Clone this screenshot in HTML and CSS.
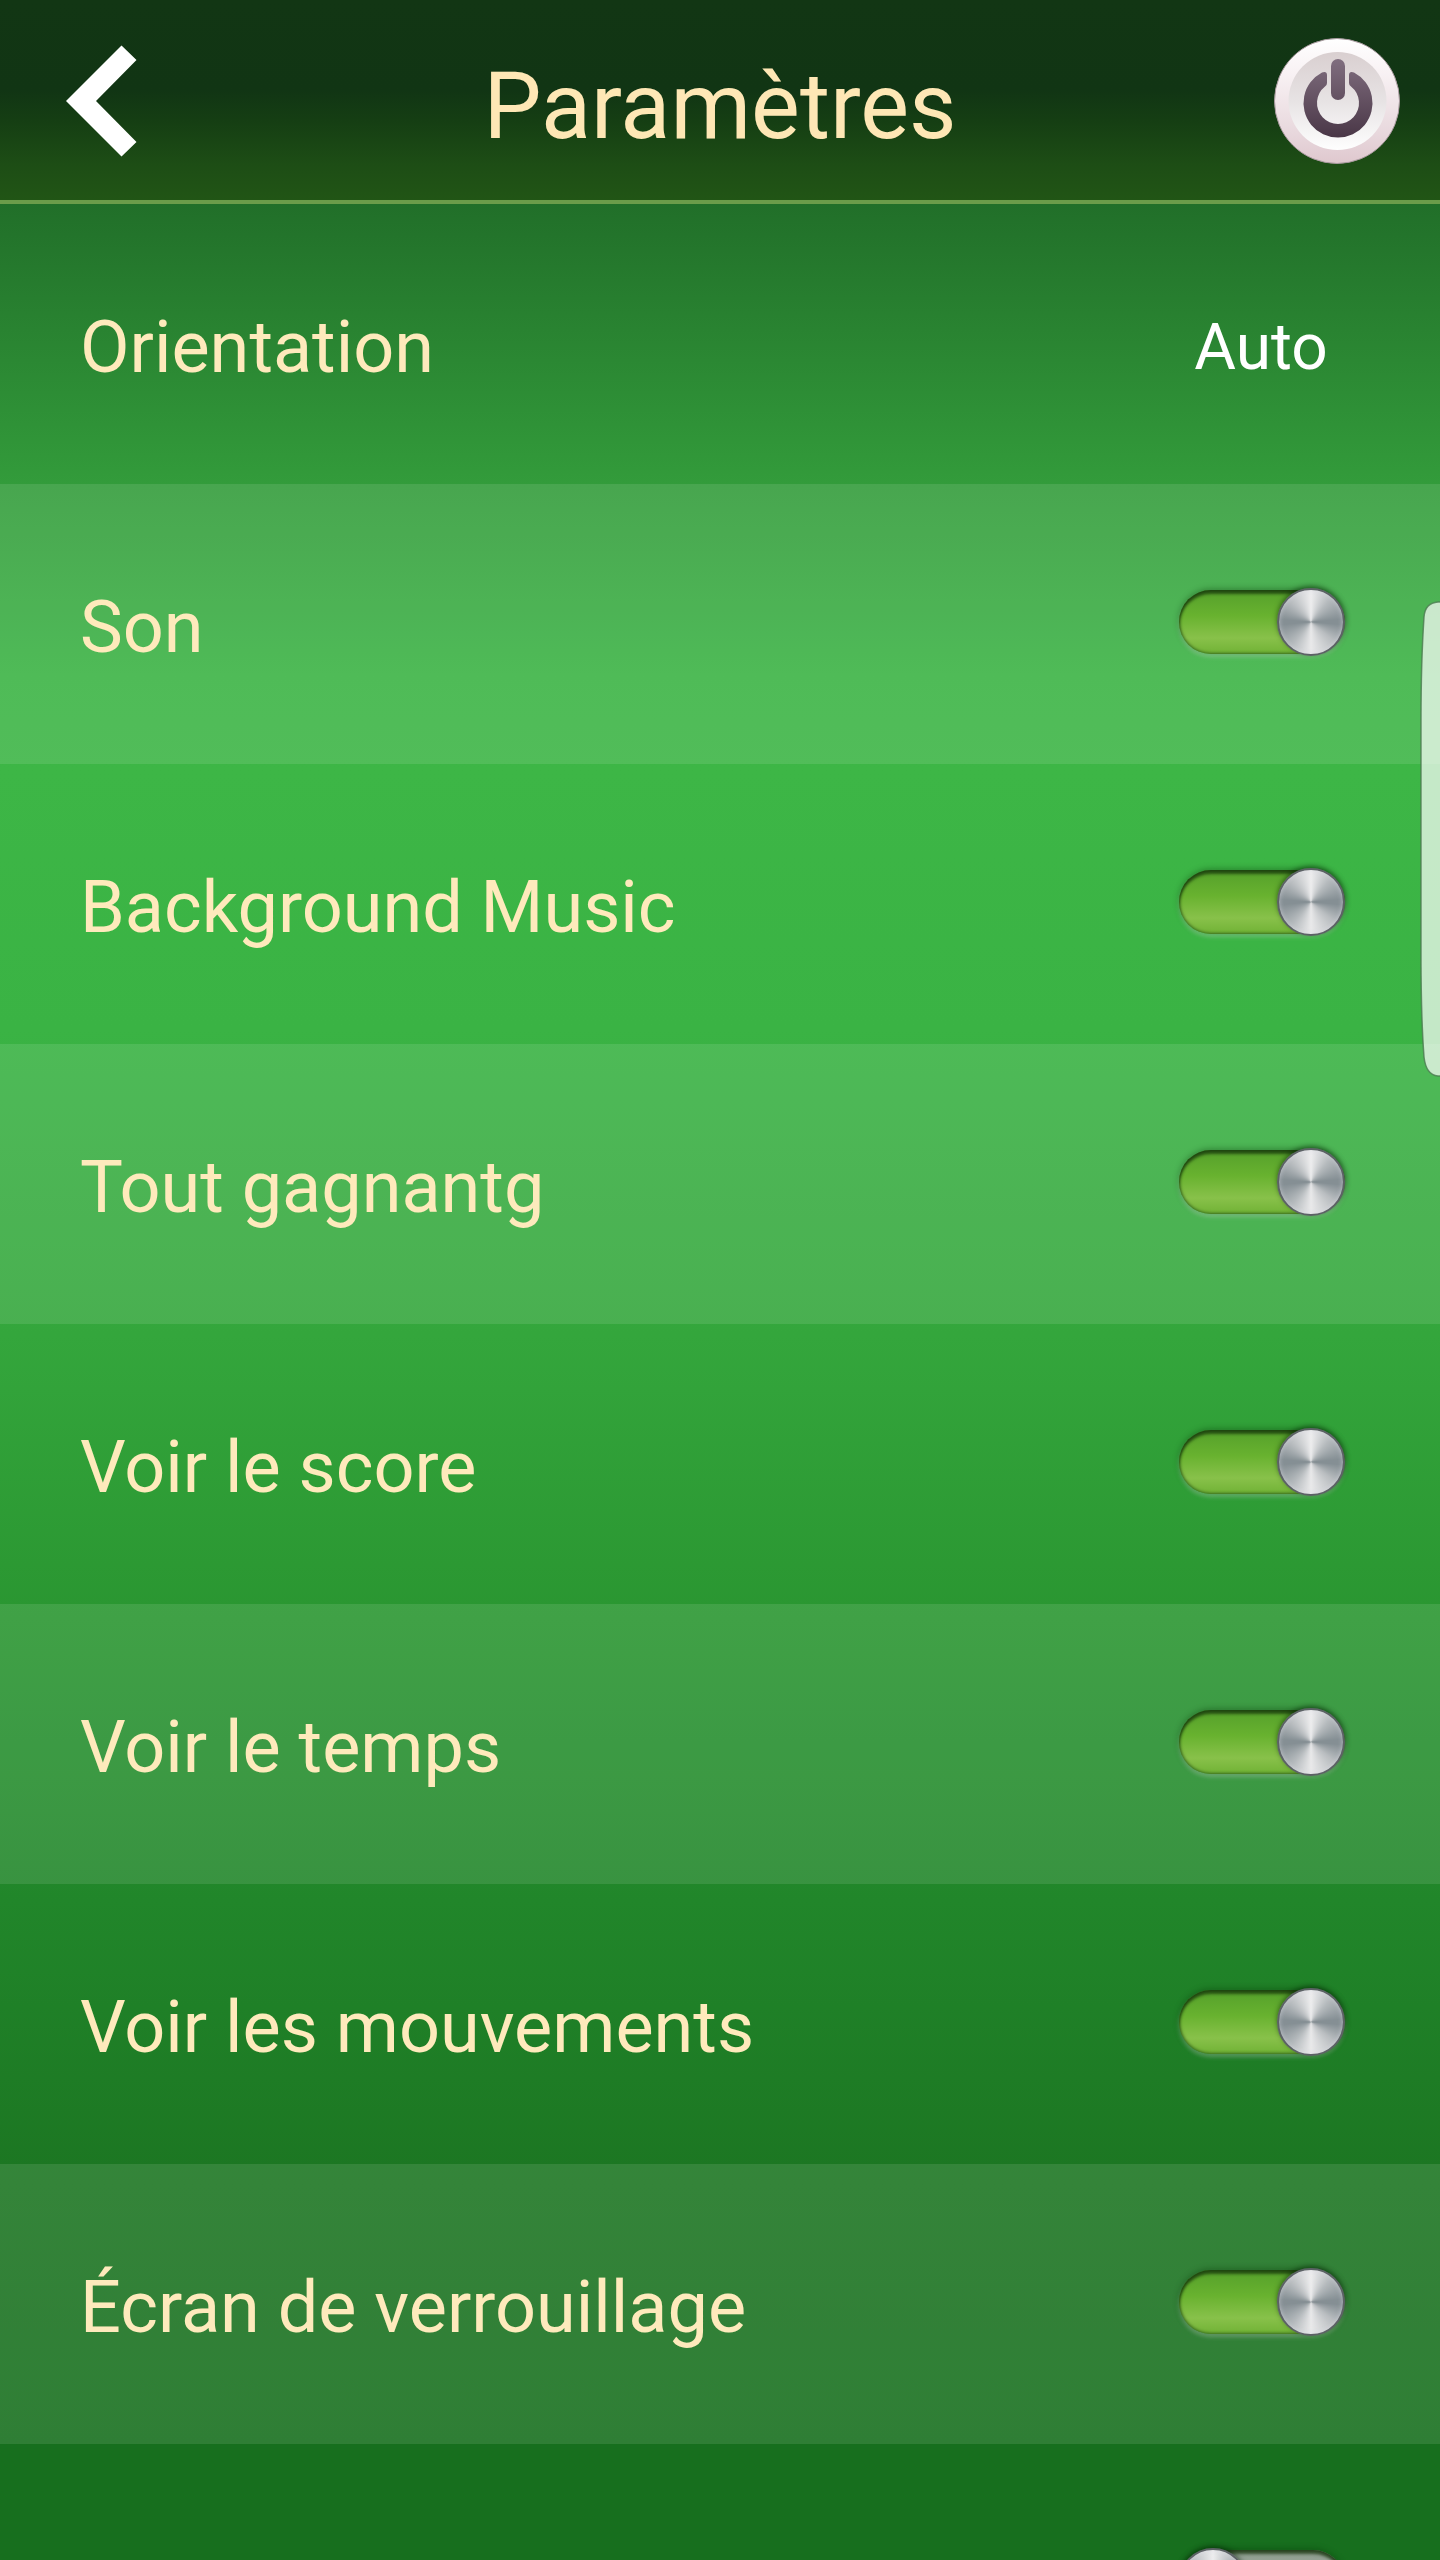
FILE: index.html
```html
<!DOCTYPE html>
<html lang="fr">
<head>
<meta charset="utf-8">
<meta name="viewport" content="width=device-width, initial-scale=1">
<title>Paramètres</title>
<link rel="stylesheet" href="styles.css">
</head>
<body>
<div class="screen">
  <header class="header">
    <button class="icon-button icon-button-start" type="button" aria-label="Retour">
      <svg class="back-icon" viewBox="0 0 72 112" aria-hidden="true">
        <path fill="#fff" d="M0 56 55.500 0.500 70.500 15 30 56 70.500 97 55.500 111.500z"/>
      </svg>
    </button>
    <h1 class="title">Paramètres</h1>
    <button class="icon-button icon-button-end" type="button" aria-label="Quitter">
      <svg class="power-icon" viewBox="0 0 128 128" aria-hidden="true">
        <defs>
          <linearGradient id="rim" x1="0" y1="0" x2="0" y2="1">
            <stop offset="0" stop-color="#fff"/>
            <stop offset=".25" stop-color="#f9f3f5"/>
            <stop offset=".75" stop-color="#e8d8dd"/>
            <stop offset="1" stop-color="#dfc8ce"/>
          </linearGradient>
          <linearGradient id="dish" x1="0" y1="0" x2="0" y2="1">
            <stop offset="0" stop-color="#d9cfd0"/>
            <stop offset=".5" stop-color="#e7e3e4"/>
            <stop offset="1" stop-color="#fefefe"/>
          </linearGradient>
          <linearGradient id="glyph" gradientUnits="userSpaceOnUse" x1="0" y1="22" x2="0" y2="100">
            <stop offset="0" stop-color="#806e7f"/>
            <stop offset="1" stop-color="#4a3747"/>
          </linearGradient>
        </defs>
        <circle cx="64" cy="64" r="62.500" fill="url(#rim)" stroke="#a99a9f" stroke-width="1"/>
        <circle cx="64.500" cy="64" r="49" fill="url(#dish)"/>
        <path fill="url(#glyph)" d="M54 38Q54 34 49 35.500A34.500 34.500 0 1 0 81 35.500Q76 34 76 38V46Q76 48 78 49.500A21 21 0 1 1 52 49.500Q54 48 54 46z"/>
        <rect x="58" y="22" width="14" height="41" rx="7" fill="url(#glyph)"/>
      </svg>
    </button>
  </header>

  <main class="list">
    <div class="row">
      <span class="label" id="orientation">Orientation</span>
      <button class="value" type="button" aria-describedby="orientation">Auto</button>
    </div>
    <div class="row">
      <label class="label" for="sound">Son</label>
      <input class="switch" type="checkbox" id="sound" checked>
    </div>
    <div class="row">
      <label class="label" for="music">Background Music</label>
      <input class="switch" type="checkbox" id="music" checked>
    </div>
    <div class="row">
      <label class="label" for="winning">Tout gagnantg</label>
      <input class="switch" type="checkbox" id="winning" checked>
    </div>
    <div class="row">
      <label class="label" for="score">Voir le score</label>
      <input class="switch" type="checkbox" id="score" checked>
    </div>
    <div class="row">
      <label class="label" for="time">Voir le temps</label>
      <input class="switch" type="checkbox" id="time" checked>
    </div>
    <div class="row">
      <label class="label" for="moves">Voir les mouvements</label>
      <input class="switch" type="checkbox" id="moves" checked>
    </div>
    <div class="row">
      <label class="label" for="lock">Écran de verrouillage</label>
      <input class="switch" type="checkbox" id="lock" checked>
    </div>
    <div class="row">
      <span class="label"></span>
      <input class="switch" type="checkbox" aria-label="Option">
    </div>
  </main>

  <svg class="edge-handle" viewBox="0 0 20 476" aria-hidden="true">
    <path fill="#fff" fill-opacity=".7" stroke="#4b7a50" stroke-opacity=".8" stroke-width="1.500" d="M22 1H18Q5 2 4 16Q1 60 1 120V356Q1 416 4 456Q6 474 18 475H22"/>
  </svg>
</div>
</body>
</html>
```
FILE: styles.css
```css
* {
  box-sizing: border-box;
}

body {
  margin: 0;
  font-family: Roboto, "Noto Sans", sans-serif;
  color: #feeabc;
}

button {
  padding: 0;
  border: 0;
  background: none;
  font: inherit;
  color: inherit;
  cursor: pointer;
}

.screen {
  position: relative;
  display: flex;
  flex-direction: column;
  height: 100vh;
  overflow: hidden;
}

.header {
  display: grid;
  grid-template-columns: 1fr auto 1fr;
  flex: none;
  align-items: center;
  min-height: 204px;
  padding-top: 2px;
  border-bottom: 4px solid #6b9c4a;
  background: linear-gradient(#123614 0%, #113514 45%, #153e13 60%, #1d4d15 82%, #215515 100%);
}

.icon-button {
  display: flex;
}

.icon-button-start {
  padding-left: 66px;
}

.icon-button-end {
  justify-content: flex-end;
  padding-right: 39px;
}

.back-icon {
  width: 72px;
  height: 112px;
}

.power-icon {
  width: 128px;
  height: 128px;
}

.title {
  margin: 0;
  padding-top: 12px;
  font-size: 92px;
  font-weight: 400;
  line-height: 108px;
  color: #fee7b5;
}

.list {
  flex: 1;
  min-height: 0;
  overflow-y: auto;
  scrollbar-width: none;
  background: linear-gradient(#216f29 0%, #339c3b 12%, #3bb344 20%, #3db646 24%, #3ab344 35%, #34a63c 48%, #2a9631 60%, #21862a 72%, #1c7622 84%, #176f1e 95%, #176f1e 100%);
}

.row {
  display: flex;
  align-items: center;
  min-height: 280px;
  padding: 0 95px 0 80px;
}

.row:nth-child(even) {
  background: rgba(255, 255, 255, 0.105);
}

.label {
  flex: 1;
  padding-top: 8px;
  font-size: 72px;
  line-height: 84px;
}

.value {
  width: 168px;
  padding-top: 8px;
  font-size: 64px;
  line-height: 76px;
  color: #fff;
}

.switch {
  display: flex;
  align-items: center;
  justify-content: flex-start;
  width: 166px;
  height: 64px;
  margin: 0 0 4px;
  border-radius: 32px;
  appearance: none;
  background: linear-gradient(#8b9a8b, #c4cfc4);
  box-shadow: inset 0 4px 3px rgba(20, 50, 10, 0.7), inset 0 0 3px 1px rgba(20, 60, 10, 0.6), 0 -1px 6px rgba(0, 50, 0, 0.4), 0 3px 4px rgba(255, 255, 255, 0.3);
  cursor: pointer;
}

.switch:checked {
  justify-content: flex-end;
  background: linear-gradient(#55a02b, #68b22f 40%, #88c14a 75%, #70b235);
}

.switch::before {
  content: "";
  width: 64px;
  height: 64px;
  border: 2px solid #5c6265;
  border-radius: 50%;
  background: conic-gradient(#ededee, #b5babd 40deg, #858f94 85deg, #858f94 95deg, #b9bdc0 130deg, #e9e9ea 180deg, #b5babd 220deg, #858f94 265deg, #858f94 275deg, #b9bdc0 315deg, #ededee);
  box-shadow: 0 -2px 5px rgba(0, 30, 0, 0.5), inset 0 0 5px rgba(220, 220, 230, 0.6);
}

.edge-handle {
  position: absolute;
  top: 601px;
  right: 0;
  width: 20px;
  height: 476px;
}
```
